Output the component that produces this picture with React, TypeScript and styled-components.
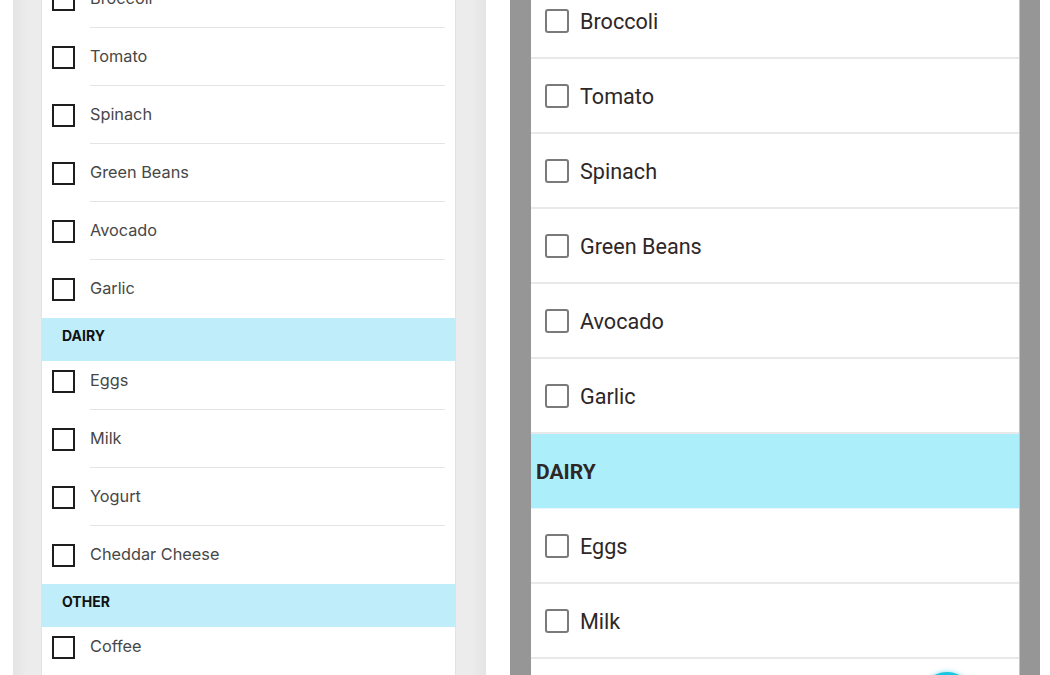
import React from "react"
import styled, { createGlobalStyle } from "styled-components"

type TSection = {
    title?: string
    items: string[]
}

const iosSections: TSection[] = [
    { items: ["Broccoli", "Tomato", "Spinach", "Green Beans", "Avocado", "Garlic"] },
    { title: "DAIRY", items: ["Eggs", "Milk", "Yogurt", "Cheddar Cheese"] },
    { title: "OTHER", items: ["Coffee", "Bread"] },
]

const androidSections: TSection[] = [
    { items: ["Broccoli", "Tomato", "Spinach", "Green Beans", "Avocado", "Garlic"] },
    { title: "DAIRY", items: ["Eggs", "Milk", "Yogurt"] },
]

const GlobalStyle = createGlobalStyle`
  html, body {
    margin: 0;
    padding: 0;
    background: #ffffff;
    overflow: hidden;
  }
  #root {
    height: 675px;
  }
`

export default function App() {
    return (
        <>
            <GlobalStyle />
            <Page>
                <IosFrame>
                    <IosScreen>
                        <IosList>
                            {iosSections.map((section, si) => (
                                <React.Fragment key={si}>
                                    {section.title && <IosHeader>{section.title}</IosHeader>}
                                    {section.items.map((item, i) => (
                                        <IosRow key={item} $first={!!section.title && i === 0}>
                                            <IosBox />
                                            <IosLabel $last={i === section.items.length - 1}>{item}</IosLabel>
                                        </IosRow>
                                    ))}
                                </React.Fragment>
                            ))}
                        </IosList>
                    </IosScreen>
                </IosFrame>
                <AndroidFrame>
                    <AndroidScreen>
                        <AndroidList>
                            {androidSections.map((section, si) => (
                                <React.Fragment key={si}>
                                    {section.title && <AndroidHeader>{section.title}</AndroidHeader>}
                                    {section.items.map((item) => (
                                        <AndroidRow key={item}>
                                            <AndroidBox />
                                            <AndroidLabel>{item}</AndroidLabel>
                                        </AndroidRow>
                                    ))}
                                </React.Fragment>
                            ))}
                        </AndroidList>
                        <Fab />
                    </AndroidScreen>
                </AndroidFrame>
            </Page>
        </>
    )
}

const Page = styled.div`
  display: flex;
  flex-direction: row;
  align-items: stretch;
  height: 675px;
  padding-left: 13px;
  gap: 24px;
`

const IosFrame = styled.div`
  display: flex;
  width: 473px;
  height: 100%;
  box-sizing: border-box;
  padding: 0 30px 0 28px;
  background: linear-gradient(90deg, #e4e4e4 0%, #ececec 3%, #ececec 97%, #e4e4e4 100%);
`

const IosScreen = styled.div`
  flex: 1;
  background: #ffffff;
  overflow: hidden;
  border-left: 1px solid #e2e2e2;
  border-right: 1px solid #e2e2e2;
`

const IosList = styled.div`
  display: flex;
  flex-direction: column;
  margin-top: -30px;
`

const IosHeader = styled.div`
  display: flex;
  align-items: center;
  height: 43px;
  box-sizing: border-box;
  padding: 0 0 9px 20px;
  background: #bfedf9;
  font-family: Inter, "Liberation Sans", sans-serif;
  font-weight: 700;
  font-size: 14px;
  color: #111111;
`

const IosRow = styled.div<{ $first?: boolean }>`
  display: flex;
  align-items: stretch;
  height: ${(p) => (p.$first ? 49 : 58)}px;
  box-sizing: border-box;
  padding-left: 10px;
  padding-top: ${(p) => (p.$first ? 0 : 9)}px;
  gap: 15px;
`

const IosBox = styled.div`
  flex: 0 0 auto;
  align-self: flex-start;
  width: 23px;
  height: 23px;
  box-sizing: border-box;
  margin-top: 9px;
  border: 2px solid #1e1e1e;
`

const IosLabel = styled.div<{ $last?: boolean }>`
  flex: 1;
  display: flex;
  align-items: flex-start;
  padding-top: 8px;
  margin-right: 10px;
  border-bottom: 1px solid ${(p) => (p.$last ? "transparent" : "#e4e4e4")};
  font-family: Inter, "Liberation Sans", sans-serif;
  font-size: 16.3px;
  line-height: 22px;
  color: #474747;
`

const AndroidFrame = styled.div`
  display: flex;
  width: 530px;
  height: 100%;
  box-sizing: border-box;
  padding: 0 20px 0 21px;
  background: #969696;
`

const AndroidScreen = styled.div`
  position: relative;
  flex: 1;
  background: #ffffff;
  overflow: hidden;
  border-right: 1px solid #c4c4c4;
`

const AndroidList = styled.div`
  display: flex;
  flex-direction: column;
  margin-top: -16px;
`

const AndroidHeader = styled.div`
  display: flex;
  align-items: center;
  height: 75px;
  box-sizing: border-box;
  padding: 2px 0 0 5px;
  background: #adeefb;
  border-bottom: 1px solid #e6f6fa;
  font-family: Roboto, "Liberation Sans", sans-serif;
  font-weight: 700;
  font-size: 21px;
  color: #2f2626;
`

const AndroidRow = styled.div`
  display: flex;
  align-items: center;
  height: 75px;
  box-sizing: border-box;
  padding: 1px 0 0 14px;
  gap: 11px;
  border-bottom: 2px solid #e9e9e9;
`

const AndroidBox = styled.div`
  flex: 0 0 auto;
  width: 24px;
  height: 24px;
  box-sizing: border-box;
  border: 2px solid #7a7a7a;
  border-radius: 3px;
`

const AndroidLabel = styled.div`
  font-family: Roboto, "Liberation Sans", sans-serif;
  font-size: 21.6px;
  color: #2e2727;
`

const Fab = styled.div`
  position: absolute;
  left: 388px;
  top: 672px;
  width: 56px;
  height: 56px;
  border-radius: 50%;
  background: #18c6de;
  box-shadow: 0 -1px 4px rgba(0, 180, 210, 0.35);
`
